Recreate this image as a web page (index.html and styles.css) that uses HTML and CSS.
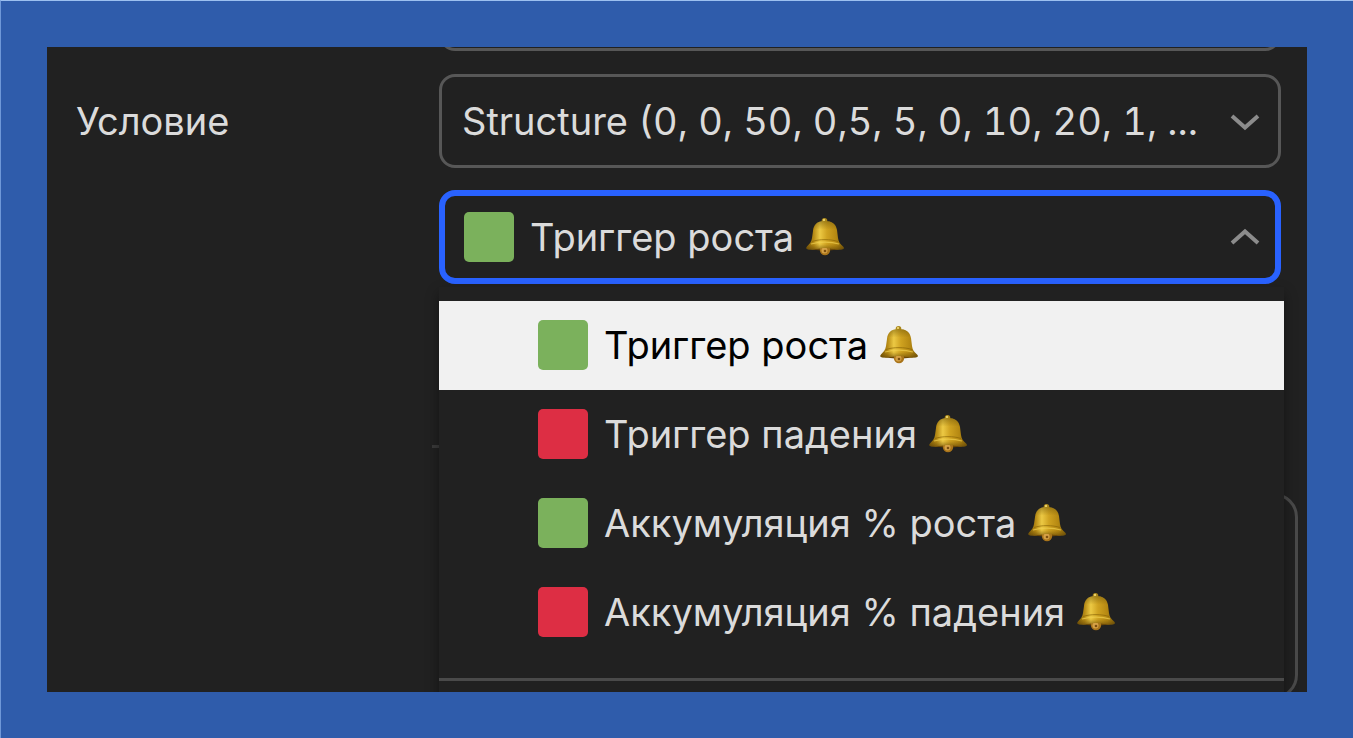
FILE: index.html
```html
<!DOCTYPE html>
<html lang="ru">
<head>
<meta charset="utf-8">
<meta name="viewport" content="width=device-width, initial-scale=1">
<title>Условие</title>
<link rel="stylesheet" href="styles.css">
</head>
<body class="page">
<svg class="defs" aria-hidden="true">
  <defs>
    <linearGradient id="gold" x1="0" x2="1" y1="0" y2="0">
      <stop offset="0" stop-color="#7d5b08"/>
      <stop offset=".2" stop-color="#b88c16"/>
      <stop offset=".36" stop-color="#ecc944"/>
      <stop offset=".55" stop-color="#cfa220"/>
      <stop offset=".8" stop-color="#b58812"/>
      <stop offset="1" stop-color="#80600c"/>
    </linearGradient>
    <linearGradient id="shade" x1="0" x2="0" y1="0" y2="1">
      <stop offset="0" stop-color="#6b5208" stop-opacity=".5"/>
      <stop offset=".3" stop-color="#6b5208" stop-opacity="0"/>
      <stop offset=".8" stop-color="#6b4c04" stop-opacity="0"/>
      <stop offset="1" stop-color="#5a3d04" stop-opacity=".6"/>
    </linearGradient>
    <symbol id="bell" viewBox="0 0 38 38">
      <circle cx="18.5" cy="2.8" r="2.8" fill="#a8851a"/>
      <circle cx="18" cy="2" r="1.2" fill="#e8cf68"/>
      <ellipse cx="19" cy="30" rx="16" ry="2.5" fill="#6a4706"/>
      <circle cx="19" cy="32" r="5.2" fill="#a9741a"/>
      <circle cx="18.5" cy="32.5" r="3" fill="#d5a146"/>
      <circle cx="19" cy="33" r="1.3" fill="#7c4f10"/>
      <path d="M18.500 3C11 3 7.500 7 7 13L6 20C5.500 24 3.500 25.500 1 28.500C-.5 30.500.5 31.500 3 31.500C9 32 12 30 19 30C26 30 29 32 35 31.500C38 31.500 38.500 30 37 28.500C34 25.500 32.500 24 32 20L31 12C30 6 26 3 18.500 3Z" fill="url(#gold)"/>
      <path d="M18.500 3C11 3 7.500 7 7 13L6 20C5.500 24 3.500 25.500 1 28.500C-.5 30.500.5 31.500 3 31.500C9 32 12 30 19 30C26 30 29 32 35 31.500C38 31.500 38.500 30 37 28.500C34 25.500 32.500 24 32 20L31 12C30 6 26 3 18.500 3Z" fill="url(#shade)"/>
      <path d="M6 23.500C13 21 25 21 32 23.500" fill="none" stroke="#8c6607" stroke-width="1" opacity=".7"/>
      <path d="M5 26C13 23.500 25 23.500 33 26" fill="none" stroke="#f0ce50" stroke-width="1.200" opacity=".7"/>
    </symbol>
  </defs>
</svg>
<main class="panel">
  <div class="previous-field"></div>
  <div class="row">
    <label class="row-label" for="source">Условие</label>
    <div class="fields">
      <div class="select-wrap">
        <select class="field field-select" id="source">
          <option>Structure (0, 0, 50, 0,5, 5, 0, 10, 20, 1, ...</option>
        </select>
        <svg class="chevron chevron-over" viewBox="0 0 30 18" aria-hidden="true"><path d="M2 3L15 14.500L28 3"/></svg>
      </div>
      <div class="dropdown">
        <button class="field field-open" type="button" aria-haspopup="listbox" aria-expanded="true" aria-controls="triggers">
          <span class="swatch green"></span>
          <span class="text">Триггер роста</span>
          <svg class="bell" aria-hidden="true"><use href="#bell"/></svg>
          <svg class="chevron" viewBox="0 0 30 18" aria-hidden="true"><path d="M2 15L15 3.500L28 15"/></svg>
        </button>
        <div class="menu">
          <ul class="options" id="triggers" role="listbox" aria-label="Условие">
            <li class="option selected" role="option" aria-selected="true"><span class="swatch green"></span><span class="text">Триггер роста</span><svg class="bell" aria-hidden="true"><use href="#bell"/></svg></li>
            <li class="option" role="option" aria-selected="false"><span class="swatch red"></span><span class="text">Триггер падения</span><svg class="bell" aria-hidden="true"><use href="#bell"/></svg></li>
            <li class="option" role="option" aria-selected="false"><span class="swatch green"></span><span class="text">Аккумуляция % роста</span><svg class="bell" aria-hidden="true"><use href="#bell"/></svg></li>
            <li class="option" role="option" aria-selected="false"><span class="swatch red"></span><span class="text">Аккумуляция % падения</span><svg class="bell" aria-hidden="true"><use href="#bell"/></svg></li>
          </ul>
        </div>
      </div>
    </div>
  </div>
  <hr class="section-line">
  <div class="card"></div>
</main>
</body>
</html>
```
FILE: styles.css
```css
* { box-sizing: border-box; }

.page {
  margin: 0;
  min-height: 100vh;
  padding: 46px;
  display: flex;
  background: #2f5cab;
  border-top: 1px solid #9cc0f0;
  border-left: 1px solid #6f98d8;
  font: 38px/48px Inter, "Noto Sans", sans-serif;
  color: #dbdbdb;
}

.defs { position: absolute; width: 0; height: 0; }

.panel {
  flex: 1;
  min-width: 0;
  height: calc(100vh - 93px);
  overflow: hidden;
  background: #212121;
}

.previous-field {
  height: 94px;
  margin: -90px 26px 23px 392px;
  border: 3px solid #575757;
  border-radius: 16px;
}

.row {
  display: grid;
  grid-template-columns: 363px minmax(0, 1fr);
  padding: 0 26px 0 29px;
}

.row-label { padding-top: 23px; }

.fields { display: grid; gap: 22px; }

.select-wrap, .dropdown { position: relative; }

.field {
  width: 100%;
  height: 94px;
  margin: 0;
  border: 3px solid #575757;
  border-radius: 16px;
  background: #212121;
  color: inherit;
  font: inherit;
}

.field-select {
  display: block;
  appearance: none;
  padding: 0 70px 0 20px;
  outline: 0;
  font-variant-numeric: tabular-nums;
}

.field-open {
  display: flex;
  align-items: center;
  padding: 0 15px 0 19px;
  border: 6px solid #2962ff;
  text-align: left;
}

.chevron {
  width: 30px;
  height: 18px;
  margin-left: auto;
  fill: none;
  stroke: #8c8c8c;
  stroke-width: 4;
}

.chevron-over {
  position: absolute;
  top: 39px;
  right: 21px;
  pointer-events: none;
}

.swatch {
  flex: none;
  width: 50px;
  height: 50px;
  margin-right: 16px;
  border-radius: 5px;
}

.green { background: #7bb15c; }
.red { background: #dd2e44; }

.text { white-space: nowrap; }

.bell {
  flex: none;
  width: 38px;
  height: 38px;
  margin-left: 12px;
}

.menu {
  position: absolute;
  z-index: 2;
  top: 97px;
  left: 0;
  right: -3px;
  height: 500px;
  padding-top: 14px;
  background: #212121;
  box-shadow: 0 6px 12px rgba(0, 0, 0, 0.4);
}

.options {
  margin: 0;
  padding: 0 0 21px;
  border-bottom: 3px solid #4a4a4a;
  list-style: none;
}

.option {
  display: flex;
  align-items: center;
  height: 89px;
  padding: 0 0 2px 99px;
}

.selected { background: #f1f1f1; color: #000; }

.section-line {
  height: 3px;
  margin: 161px 26px 45px 385px;
  border: 0;
  background: #3a3a3a;
}

.card {
  height: 206px;
  margin: 0 9px 0 392px;
  border: 3px solid #4a4a4a;
  border-radius: 24px;
}
```
